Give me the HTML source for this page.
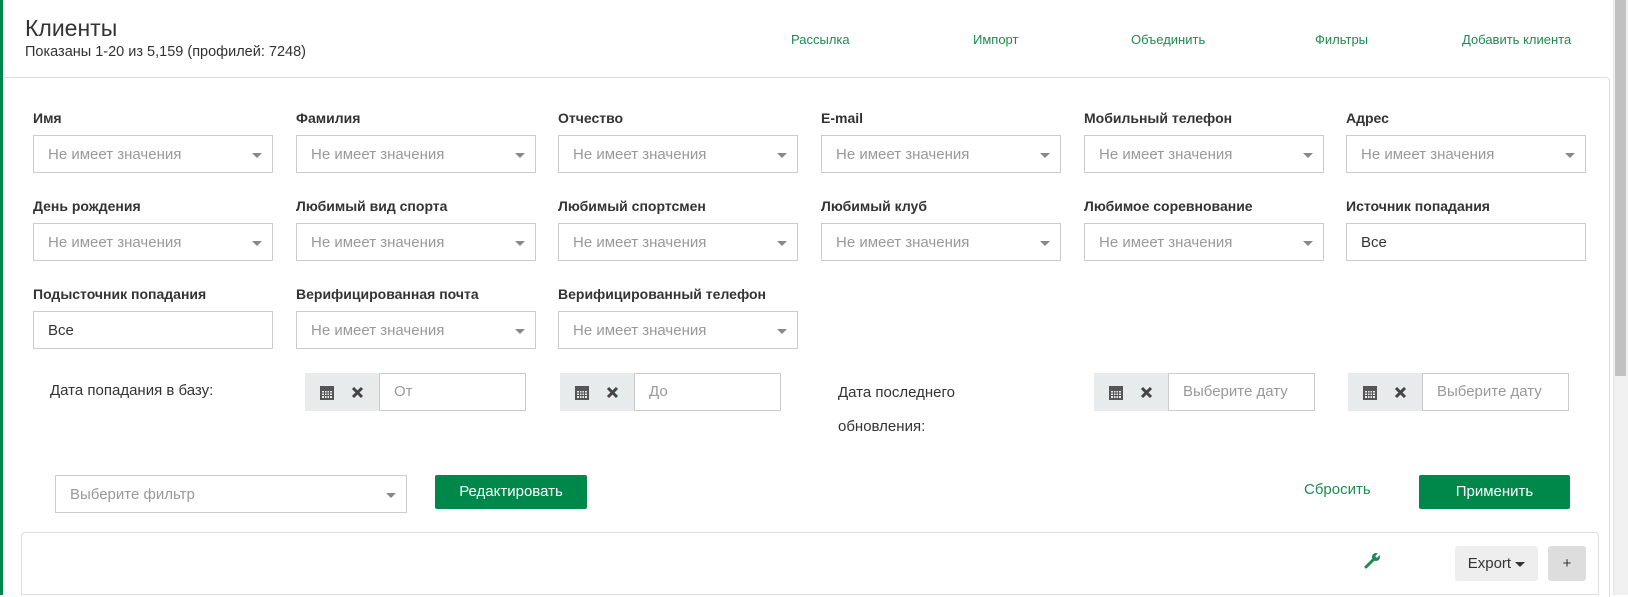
<!DOCTYPE html>
<html><head><meta charset="utf-8"><style>
*{box-sizing:border-box;margin:0;padding:0}
body{width:1628px;height:595px;overflow:hidden;background:#fff;font-family:"Liberation Sans",sans-serif;color:#333;position:relative}
.abs{position:absolute}
.bar{left:0;top:0;width:3px;height:595px;background:#00884b}
.title{left:25px;top:15px;font-size:23px;color:#333}
.sub{left:25px;top:44px;font-size:14.5px;color:#333}
.lnk{top:32px;font-size:13px;color:#1e8a50}
.card{left:4px;top:77px;width:1606px;height:520px;border-top:1px solid #ddd;border-right:1px solid #ddd;border-top-right-radius:4px}
.lbl{font-size:14px;font-weight:bold;color:#333}
.inp{width:240px;height:38px;border:1px solid #ccc;background:#fff;font-size:15px;color:#999;padding:10px 14px}
.inp.v{color:#333}
.caret{position:absolute;right:10px;top:17px;width:0;height:0;border-left:5px solid transparent;border-right:5px solid transparent;border-top:5px solid #888}
.dg{height:38px;display:flex;}
.ad{background:#e8ebec;display:flex;align-items:center;justify-content:space-around;padding:0 6px}
.di{border:1px solid #ccc;flex:1;font-size:15px;color:#999;padding:9px 14px;background:#fff}
.btn{background:#00884b;color:#fff;font-size:15px;border-radius:2px;text-align:center;line-height:34px}
.scroll{left:1613px;top:0;width:15px;height:595px;background:#f1f1f1;border-left:1px solid #e6e6e6}
.thumb{left:1615px;top:0;width:11px;height:376px;background:#c1c1c1}
</style></head><body>
<div class="abs bar"></div>
<div class="abs title">Клиенты</div>
<div class="abs sub">Показаны 1-20 из 5,159 (профилей: 7248)</div>
<div class="abs lnk" style="left:791px">Рассылка</div>
<div class="abs lnk" style="left:973px">Импорт</div>
<div class="abs lnk" style="left:1131px">Объединить</div>
<div class="abs lnk" style="left:1315px">Фильтры</div>
<div class="abs lnk" style="left:1462px">Добавить клиента</div>
<div class="abs card"></div>

<!-- row1 -->
<div class="abs lbl" style="left:33px;top:110px">Имя</div>
<div class="abs lbl" style="left:296px;top:110px">Фамилия</div>
<div class="abs lbl" style="left:558px;top:110px">Отчество</div>
<div class="abs lbl" style="left:821px;top:110px">E-mail</div>
<div class="abs lbl" style="left:1084px;top:110px">Мобильный телефон</div>
<div class="abs lbl" style="left:1346px;top:110px">Адрес</div>
<div class="abs inp" style="left:33px;top:135px">Не имеет значения<i class="caret"></i></div>
<div class="abs inp" style="left:296px;top:135px">Не имеет значения<i class="caret"></i></div>
<div class="abs inp" style="left:558px;top:135px">Не имеет значения<i class="caret"></i></div>
<div class="abs inp" style="left:821px;top:135px">Не имеет значения<i class="caret"></i></div>
<div class="abs inp" style="left:1084px;top:135px">Не имеет значения<i class="caret"></i></div>
<div class="abs inp" style="left:1346px;top:135px">Не имеет значения<i class="caret"></i></div>
<!-- row2 -->
<div class="abs lbl" style="left:33px;top:198px">День рождения</div>
<div class="abs lbl" style="left:296px;top:198px">Любимый вид спорта</div>
<div class="abs lbl" style="left:558px;top:198px">Любимый спортсмен</div>
<div class="abs lbl" style="left:821px;top:198px">Любимый клуб</div>
<div class="abs lbl" style="left:1084px;top:198px">Любимое соревнование</div>
<div class="abs lbl" style="left:1346px;top:198px">Источник попадания</div>
<div class="abs inp" style="left:33px;top:223px">Не имеет значения<i class="caret"></i></div>
<div class="abs inp" style="left:296px;top:223px">Не имеет значения<i class="caret"></i></div>
<div class="abs inp" style="left:558px;top:223px">Не имеет значения<i class="caret"></i></div>
<div class="abs inp" style="left:821px;top:223px">Не имеет значения<i class="caret"></i></div>
<div class="abs inp" style="left:1084px;top:223px">Не имеет значения<i class="caret"></i></div>
<div class="abs inp v" style="left:1346px;top:223px">Все</div>
<!-- row3 -->
<div class="abs lbl" style="left:33px;top:286px">Подысточник попадания</div>
<div class="abs lbl" style="left:296px;top:286px">Верифицированная почта</div>
<div class="abs lbl" style="left:558px;top:286px">Верифицированный телефон</div>
<div class="abs inp v" style="left:33px;top:311px">Все</div>
<div class="abs inp" style="left:296px;top:311px">Не имеет значения<i class="caret"></i></div>
<div class="abs inp" style="left:558px;top:311px">Не имеет значения<i class="caret"></i></div>

<!-- dates -->
<div class="abs" style="left:50px;top:382px;font-size:15px">Дата попадания в базу:</div>
<div class="abs" style="left:838px;top:376px;font-size:15px;line-height:34px">Дата последнего<br>обновления:</div>

<div class="abs dg" style="left:305px;top:373px;width:221px"><div class="ad" style="width:74px"><svg width="14" height="15" viewBox="0 0 14 15"><rect x="0" y="1" width="14" height="14" fill="#555"/><rect x="2" y="6" width="10" height="7" fill="#e8ebec"/><path d="M2 8h10M2 10.5h10M4.5 6v7M7 6v7M9.5 6v7" stroke="#555" stroke-width="1"/></svg><svg width="13" height="13" viewBox="0 0 13 13"><path d="M2 2L11 11M11 2L2 11" stroke="#444" stroke-width="3"/></svg></div><div class="di">От</div></div>
<div class="abs dg" style="left:560px;top:373px;width:221px"><div class="ad" style="width:74px"><svg width="14" height="15" viewBox="0 0 14 15"><rect x="0" y="1" width="14" height="14" fill="#555"/><rect x="2" y="6" width="10" height="7" fill="#e8ebec"/><path d="M2 8h10M2 10.5h10M4.5 6v7M7 6v7M9.5 6v7" stroke="#555" stroke-width="1"/></svg><svg width="13" height="13" viewBox="0 0 13 13"><path d="M2 2L11 11M11 2L2 11" stroke="#444" stroke-width="3"/></svg></div><div class="di">До</div></div>
<div class="abs dg" style="left:1094px;top:373px;width:221px"><div class="ad" style="width:74px"><svg width="14" height="15" viewBox="0 0 14 15"><rect x="0" y="1" width="14" height="14" fill="#555"/><rect x="2" y="6" width="10" height="7" fill="#e8ebec"/><path d="M2 8h10M2 10.5h10M4.5 6v7M7 6v7M9.5 6v7" stroke="#555" stroke-width="1"/></svg><svg width="13" height="13" viewBox="0 0 13 13"><path d="M2 2L11 11M11 2L2 11" stroke="#444" stroke-width="3"/></svg></div><div class="di">Выберите дату</div></div>
<div class="abs dg" style="left:1348px;top:373px;width:221px"><div class="ad" style="width:74px"><svg width="14" height="15" viewBox="0 0 14 15"><rect x="0" y="1" width="14" height="14" fill="#555"/><rect x="2" y="6" width="10" height="7" fill="#e8ebec"/><path d="M2 8h10M2 10.5h10M4.5 6v7M7 6v7M9.5 6v7" stroke="#555" stroke-width="1"/></svg><svg width="13" height="13" viewBox="0 0 13 13"><path d="M2 2L11 11M11 2L2 11" stroke="#444" stroke-width="3"/></svg></div><div class="di">Выберите дату</div></div>

<!-- filter row -->
<div class="abs inp" style="left:55px;top:475px;width:352px;height:38px">Выберите фильтр<i class="caret"></i></div>
<div class="abs btn" style="left:435px;top:475px;width:152px">Редактировать</div>
<div class="abs" style="left:1304px;top:481px;font-size:15px;color:#1e8a50">Сбросить</div>
<div class="abs btn" style="left:1419px;top:475px;width:151px">Применить</div>

<!-- bottom panel -->
<div class="abs" style="left:21px;top:532px;width:1578px;height:63px;border:1px solid #ddd;border-radius:4px 4px 0 0"></div>
<svg class="abs" style="left:1364px;top:551px" width="18" height="18" viewBox="0 0 18 18"><path d="M2 16L10 8" stroke="#1e8a50" stroke-width="3" stroke-linecap="round"/><circle cx="12" cy="6" r="4" fill="#1e8a50"/><path d="M12 6L16 2" stroke="#fff" stroke-width="2.5"/></svg>
<div class="abs" style="left:1455px;top:546px;width:83px;height:35px;background:#eee;border-radius:3px;font-size:15px;line-height:35px;text-align:center;color:#333">Export <span style="display:inline-block;width:0;height:0;border-left:5px solid transparent;border-right:5px solid transparent;border-top:5px solid #333;vertical-align:middle"></span></div>
<div class="abs" style="left:1548px;top:546px;width:38px;height:35px;background:#ddd;border-radius:3px;font-size:15px;line-height:35px;text-align:center;color:#333">+</div>

<div class="abs scroll"></div>
<div class="abs thumb"></div>
</body></html>
